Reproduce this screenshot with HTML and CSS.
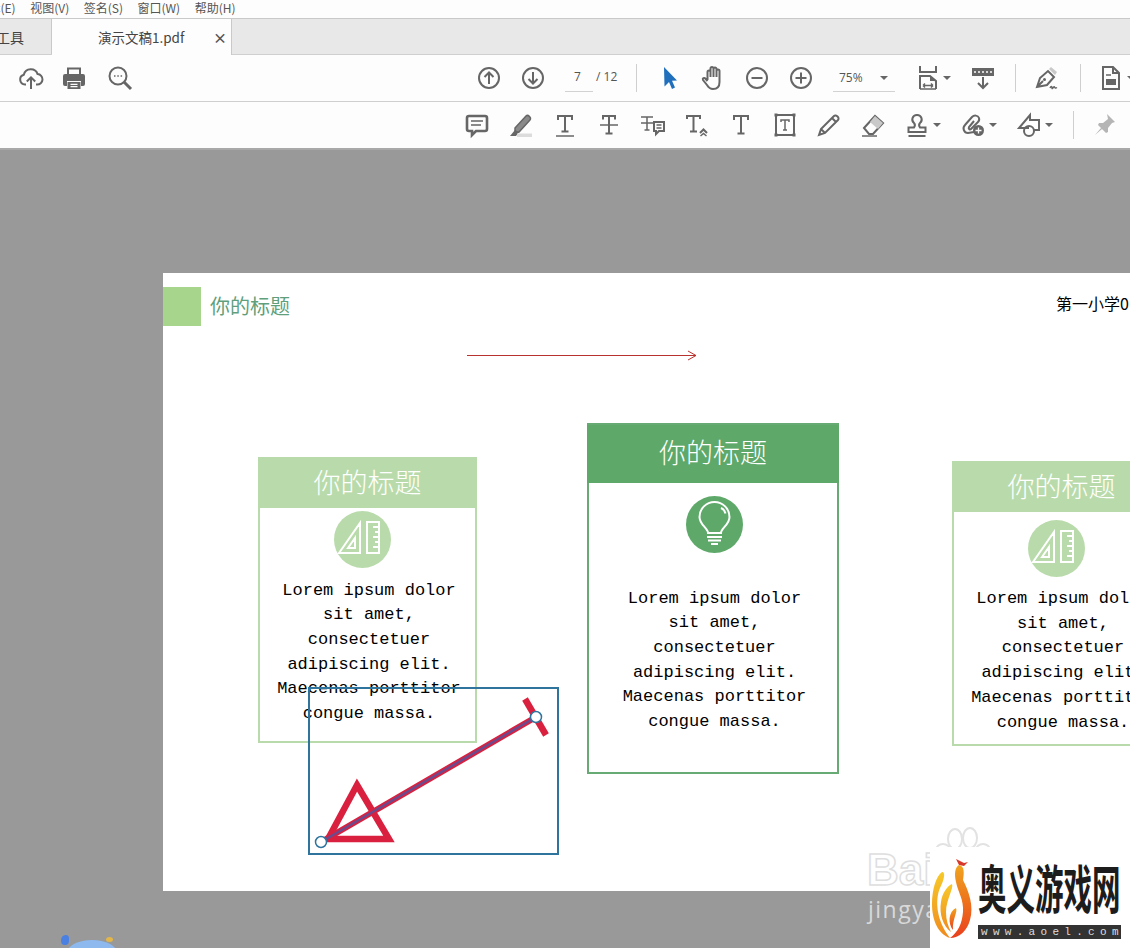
FILE: index.html
```html
<!DOCTYPE html>
<html lang="zh-CN">
<head>
<meta charset="utf-8">
<title>演示文稿1.pdf</title>
<link rel="stylesheet" href="styles.css">
</head>
<body>
<div class="app">
  <nav class="menu">
    <span class="menu-first">编辑(E)</span><span>视图(V)</span><span>签名(S)</span><span>窗口(W)</span><span>帮助(H)</span>
  </nav>
  <div class="tabs">
    <div class="tab-tools"><span>工具</span></div>
    <div class="tab-doc"><span class="tab-name">演示文稿1.pdf</span><span class="tab-close">×</span></div>
  </div>
  <div class="bar bar-main">
    <div class="cell"><svg class="ic" viewBox="0 0 24 24"><path d="M7 18.500H6A5 5 0 0 1 4.800 8.700 7.200 7.200 0 0 1 18.600 8.100 5.200 5.200 0 0 1 18 18.500H17"/><path d="M12 23V11.500M7.800 15.500l4.200-4.200 4.200 4.200"/></svg></div>
    <div class="cell"><svg class="ic" viewBox="0 0 24 24"><path class="solid" d="M3 8h18a2 2 0 0 1 2 2v8a2 2 0 0 1-2 2h-2v-5H5v5H3a2 2 0 0 1-2-2v-8a2 2 0 0 1 2-2z"/><path d="M6 8V2.500h12V8"/><path class="solid" d="M5.500 16h13v7h-13z"/><path class="white" d="M8.500 18.300h7M8.500 20.700h7"/></svg></div>
    <div class="cell"><svg class="ic" viewBox="0 0 24 24"><circle cx="10" cy="10" r="8.500"/><path class="thick" d="M16 16l7 7"/><path class="thin" d="M6 10h1.500M9.300 10h1.500M12.600 10h1.500"/></svg></div>
    <div></div>
    <div class="cell"><svg class="ic" viewBox="0 0 24 24"><circle cx="12" cy="12" r="10"/><path d="M12 18V6.500M7.500 11l4.500-4.500 4.500 4.500"/></svg></div>
    <div class="cell"><svg class="ic" viewBox="0 0 24 24"><circle cx="12" cy="12" r="10"/><path d="M12 6v11.500M7.500 13l4.500 4.500 4.500-4.500"/></svg></div>
    <div class="pager"><span class="page-input">7</span><span class="page-total">/ 12</span></div>
    <div class="cell"><i class="sep"></i></div>
    <div class="cell"><svg class="ic" viewBox="0 0 24 24"><path class="pointer" d="M6 1l13 13.500-5 .3 3 6.700-3 1.500-3-7-4.500 4.500z"/></svg></div>
    <div class="cell"><svg class="ic" viewBox="0 0 24 24"><path d="M6.500 14V6a1.500 1.500 0 0 1 3 0v5M9.500 11V2.500a1.500 1.500 0 0 1 3 0V11M12.500 11V3a1.500 1.500 0 0 1 3 0v8M15.500 11V5a1.500 1.500 0 0 1 3 0V16C18.500 20.500 16 23 12 23c-3 0-4.500-1.500-6-4L2 14c-.8-1.500 1.200-2.800 2.300-1.500l2.200 2.500"/></svg></div>
    <div class="cell"><svg class="ic" viewBox="0 0 24 24"><circle cx="12" cy="12" r="10"/><path d="M6.500 12h11"/></svg></div>
    <div class="cell"><svg class="ic" viewBox="0 0 24 24"><circle cx="12" cy="12" r="10"/><path d="M6.500 12h11M12 6.500v11"/></svg></div>
    <div class="zoombox"><div class="zoom-field"><span>75%</span><i class="caret"></i></div></div>
    <div class="wc"><svg class="ic" viewBox="0 0 24 24"><path d="M5 0v6h16V0M5 23V10h10l6 5v8"/><path class="thin" d="M5 23h16M8 19.500h10M8 19.500l2-2M8 19.500l2 2M18 19.500l-2-2M18 19.500l-2 2"/><path class="solid" d="M15 10l6 5h-6z"/></svg><i class="caret"></i></div>
    <div class="cell"><svg class="ic" viewBox="0 0 24 24"><path class="solid" d="M1 2h22v8H1z"/><path class="white" stroke-dasharray="2 2" d="M3 6h18"/><path d="M12 11v11M7 17l5 5 5-5"/></svg></div>
    <div class="cell"><i class="sep"></i></div>
    <div class="cell"><svg class="ic" viewBox="0 0 24 24"><path d="M2 21l3-9 8-7 6 6-7 8zM2 21l6-6"/><circle class="solid" cx="9.500" cy="13.500" r="1.500"/><path class="pale" d="M14 3l2-2 6 5-2 3z"/><path class="thin" d="M15 22c1-2 2-2 2 0s2-2 2.500-1 1 1.500 2.500.5"/></svg></div>
    <div class="cell"><i class="sep"></i></div>
    <div class="wc wc-doc"><svg class="ic" viewBox="0 0 24 24"><path d="M4 1h10l6 6v16H4zM14 1v6h6"/><path class="thin" d="M7 9h5"/><path class="solid" d="M7 13h10v6H7z"/></svg><i class="caret"></i></div>
  </div>
  <div class="bar bar-comment">
    <div></div>
    <div class="cell"><svg class="ic" viewBox="0 0 24 24"><path class="bold" d="M4 3h16a2 2 0 0 1 2 2v11a2 2 0 0 1-2 2H11l-4 4v-4H4a2 2 0 0 1-2-2V5a2 2 0 0 1 2-2z"/><path class="thin" d="M6 8h12M6 12h10"/></svg></div>
    <div class="cell"><svg class="ic" viewBox="0 0 24 24"><path class="mid" d="M6 15L17 3c2-2 6 2 4 4L10 19l-4 1z"/><path class="solid" d="M6 17l-5 6h6l3-4z"/><path class="hl" d="M8 20.500h15V24H8z"/></svg></div>
    <div class="cell"><svg class="ic" viewBox="0 0 24 24"><path d="M5 7V3h14v4M12 3v15M8.500 18.500h7"/><path class="thin" d="M3 23h18"/></svg></div>
    <div class="cell"><svg class="ic" viewBox="0 0 24 24"><path d="M6 6.500V3h12v3.500M12 3v17M8.500 20.500h7"/><path class="thin" d="M3 12h18"/></svg></div>
    <div class="cell"><svg class="ic" viewBox="0 0 24 24"><path class="thin" d="M0 4h12M0 10h12M6 4v13M3.500 17h5"/><path d="M13 9h10v9h-5l-3 3v-3h-2z"/><path class="thin" d="M15.500 12h5M15.500 15h5"/></svg></div>
    <div class="cell"><svg class="ic" viewBox="0 0 24 24"><path d="M2 6V3h13v3M8.500 3v15M5 18.500h7"/><path d="M15 20l3.500-3.500 3.500 3.500"/><path class="thin" d="M15.500 23l3-2.500 3 2.500"/></svg></div>
    <div class="cell"><svg class="ic" viewBox="0 0 24 24"><path d="M5 7V3h14v4M12 3v17M8.500 20.500h7"/></svg></div>
    <div class="cell"><svg class="ic" viewBox="0 0 24 24"><path d="M3 2h18v20H3z"/><path class="thin" d="M8 9V7h8v2M12 7v10M10 17h4"/><path class="solid" d="M1.500 .5h3v3h-3zM19.500 .5h3v3h-3zM1.500 20.500h3v3h-3zM19.500 20.500h3v3h-3z"/></svg></div>
    <div class="cell"><svg class="ic" viewBox="0 0 24 24"><path d="M2 22l2-6L17 3c2-2 6 2 4 4L8 20zM4 16l4 4M15 5l4 4"/></svg></div>
    <div class="cell"><svg class="ic" viewBox="0 0 24 24"><path d="M3 15L14 3l8 7-10 11H8z"/><path class="pale" d="M9 9l5-6 8 7-5 6z"/><path class="thin" d="M1 23h15"/></svg></div>
    <div class="wc"><svg class="ic" viewBox="0 0 24 24"><path d="M12 2a4.500 4.500 0 0 0-3 8c1 1 1 3 0 4.500H3.500V19h17v-4.500H15c-1-1.500-1-3.500 0-4.500a4.500 4.500 0 0 0-3-8zM3.500 23h17"/></svg><i class="caret"></i></div>
    <div class="wc"><svg class="ic" viewBox="0 0 24 24"><path d="M13 19l-6 1c-4 0-6-5-3-8l7-8c2-2 6-2 7 1s-1 4-2 5l-6 6c-1 1-3 0-2-2l5-6"/><circle class="solid" cx="17.500" cy="17.500" r="5.500"/><path class="white" d="M14.500 17.500h6M17.500 14.500v6"/></svg><i class="caret"></i></div>
    <div class="wc"><svg class="ic" viewBox="0 0 24 24"><path d="M12 15L2 15 13 2v5h9v10h-5"/><circle cx="12" cy="18" r="5"/></svg><i class="caret"></i></div>
    <div class="cell"><i class="sep"></i></div>
    <div class="cell"><svg class="ic ic-off" viewBox="0 0 24 24"><path class="solid-off" d="M14 1l8 8-3 1-4 5 0 4-2 1-8-8 1-2h4l5-4zM8 15l-6 7 7-6z"/></svg></div>
  </div>
  <main class="canvas">
    <section class="slide">
      <div class="slide-mark"></div>
      <div class="slide-title">你的标题</div>
      <div class="slide-school">第一小学0</div>
      <svg class="slide-arrow" viewBox="0 0 232 14"><path d="M0 6.500h229M221 2l8 4.500-8 4.500"/></svg>

      <article class="card card-a">
        <h2>你的标题</h2>
        <div class="disc disc-light"><svg viewBox="0 0 57 57" class="glyph"><path d="M5 42L26 12v30zM14 37l7-10v10zM33 11h12v31H33zM39 16h6M41 21h4M39 26h6M41 31h4M39 36h6"/></svg></div>
        <p>Lorem ipsum dolor<br>sit amet,<br>consectetuer<br>adipiscing elit.<br>Maecenas porttitor<br>congue massa.</p>
      </article>

      <article class="card card-b">
        <h2>你的标题</h2>
        <div class="disc disc-dark"><svg viewBox="0 0 57 57" class="glyph"><path d="M22 37c0-5-8.500-8-8.500-16a15 15 0 0 1 30 0c0 8-8.500 11-8.500 16zM21 41h15M22 44.500h13M25 48h7M35 12c2.500 1 4 3 4.500 5.500"/></svg></div>
        <p>Lorem ipsum dolor<br>sit amet,<br>consectetuer<br>adipiscing elit.<br>Maecenas porttitor<br>congue massa.</p>
      </article>

      <article class="card card-c">
        <h2>你的标题</h2>
        <div class="disc disc-light"><svg viewBox="0 0 57 57" class="glyph"><path d="M5 42L26 12v30zM14 37l7-10v10zM33 11h12v31H33zM39 16h6M41 21h4M39 26h6M41 31h4M39 36h6"/></svg></div>
        <p>Lorem ipsum dolor<br>sit amet,<br>consectetuer<br>adipiscing elit.<br>Maecenas porttitor<br>congue massa.</p>
      </article>

      <svg class="annot" viewBox="0 0 252 170">
        <path class="annot-shape" d="M49 98L81 152H20z"/>
        <path class="annot-shape" d="M217 12l21 36"/>
        <path class="annot-shape annot-shaft" d="M13 155L228 30"/>
        <path class="annot-core" d="M13 155L228 30"/>
        <rect class="annot-box" x="1" y="1" width="249" height="166"/>
        <circle class="annot-handle" cx="228" cy="30" r="5.500"/>
        <circle class="annot-handle" cx="13" cy="155" r="5.500"/>
      </svg>
    </section>
    <div class="wm-word">Bai</div>
    <svg class="wm-paw" viewBox="0 0 60 30"><ellipse cx="22" cy="12" rx="7" ry="10"/><ellipse cx="37" cy="11" rx="7" ry="10"/><ellipse cx="10" cy="23" rx="7" ry="6"/><ellipse cx="50" cy="23" rx="7" ry="6"/></svg>
    <div class="wm-sub">jingya</div>
    <div class="bird"><i class="bird-fin"></i><i class="bird-dot"></i><i class="bird-body"></i></div>
    <aside class="logo">
      <svg class="logo-flame" viewBox="0 0 42 82">
        <defs>
          <linearGradient id="fa" x1="0" y1="0" x2="0" y2="1"><stop offset="0" stop-color="#f0a51e"/><stop offset="1" stop-color="#ea3f1d"/></linearGradient>
          <linearGradient id="fb" x1="0" y1="0" x2="0" y2="1"><stop offset="0" stop-color="#f7c929"/><stop offset="1" stop-color="#ef8a1e"/></linearGradient>
        </defs>
        <path fill="#d8392b" d="M24 1l8 4 4-1-4 4-5-1z"/>
        <path fill="url(#fa)" d="M27 7c6 1 5 9 4 15 6 12 11 26 7 40-3 11-11 18-20 18 8-6 12-14 13-26 1-12-5-20-7-30-2-8-1-15 3-17z"/>
        <path fill="url(#fb)" d="M10 14c4 0 2 8-2 16C3 42 4 62 18 80 6 76 0 62 0 46 0 32 4 18 10 14z"/>
        <path fill="url(#fb)" d="M20 26c2 4-6 16-6 28 0 8 2 14 5 20-8-6-12-18-10-30 1-8 6-16 11-18z"/>
        <path fill="url(#fa)" d="M24 50c2 4-4 12-3 22-5-6-5-18 3-22z"/>
      </svg>
      <div class="logo-text">
        <div class="logo-name">奥义游戏网</div>
        <div class="logo-url">www.aoel.com</div>
      </div>
    </aside>
  </main>
</div>
</body>
</html>
```
FILE: styles.css
```css
* { box-sizing: border-box; }
html, body { margin: 0; padding: 0; }
body { width: 1130px; height: 948px; overflow: hidden; background: #999; font-family: "Noto Sans CJK SC", "Liberation Sans", sans-serif; }
.app { width: 1130px; height: 948px; display: flex; flex-direction: column; overflow: hidden; position: relative; }

.menu { height: 19px; flex: none; display: flex; gap: 14.500px; margin-left: -23.500px; font-size: 12px; line-height: 15px; color: #555; background: #fdfdfd; border-bottom: 1px solid #c9c9c9; white-space: nowrap; width: 1153.500px; }

.tabs { height: 36px; flex: none; display: flex; background: #e8e8e8; border-bottom: 1px solid #cfcfcf; }
.tab-tools { width: 52px; display: flex; align-items: center; justify-content: flex-end; padding-right: 27px; font-size: 14px; color: #444; border-right: 1px solid #c9c9c9; white-space: nowrap; }
.tab-doc { width: 180px; height: 36px; display: flex; align-items: center; background: #fdfdfd; border-right: 1px solid #c9c9c9; padding-left: 46px; font-size: 13.500px; color: #444; }
.tab-name { width: 115px; }
.tab-close { font-size: 14px; font-weight: 700; color: #555; line-height: 1; }

.bar { flex: none; display: grid; align-items: center; background: #fdfdfd; }
.bar-main { height: 47px; border-bottom: 1px solid #cfcfcf; padding-left: 9px; grid-template-columns: 44px 42px 50px 322px 44px 44px 72px 18px 50px 36px 52px 36px 86px 56px 44px 20px 44px 22px 50px; }
.bar-comment { height: 48px; border-bottom: 2px solid #a9a9a9; grid-template-columns: 455px repeat(10, 44px) 56px 56px 56px 20px 44px; }

.cell { display: flex; justify-content: center; align-items: center; height: 24px; }
.wc { display: flex; align-items: center; gap: 4px; padding-left: 10px; }
.wc-doc { padding-left: 8px; }

.ic { width: 24px; height: 24px; flex: none; fill: none; stroke: #666; stroke-width: 2; overflow: visible; }
.ic .solid { fill: #666; stroke: none; }
.ic .white { stroke: #fdfdfd; stroke-width: 1.300; }
.ic .thin { stroke-width: 1.500; }
.ic .mid { fill: #8a8a8a; stroke: #666; stroke-width: 1.500; }
.ic .bold { stroke-width: 2.600; }
.ic .thick { stroke-width: 3; }
.ic .pale { fill: #c9c9c9; stroke: none; }
.ic .hl { fill: #dcdcdc; stroke: none; }
.ic .pointer { fill: #1f6fbd; stroke: none; }
.ic-off .solid-off { fill: #b5b5b5; stroke: none; }

.sep { display: block; width: 1px; height: 28px; background: #cfcfcf; }
.caret { display: block; width: 0; height: 0; border-left: 4px solid transparent; border-right: 4px solid transparent; border-top: 4px solid #666; flex: none; }

.pager { display: flex; align-items: flex-start; height: 28px; padding-left: 10px; font-size: 12px; color: #555; font-family: "Open Sans", "Liberation Sans", sans-serif; }
.page-input { width: 28px; height: 28px; line-height: 26px; text-align: center; padding-right: 3px; border-bottom: 1px solid #d2d2d2; }
.page-total { margin-left: 3px; line-height: 26px; white-space: nowrap; }

.zoombox { padding-left: 14px; }
.zoom-field { width: 62px; height: 28px; padding: 0 7px 0 6px; display: flex; align-items: center; justify-content: space-between; font-size: 12px; color: #555; font-family: "Open Sans", "Liberation Sans", sans-serif; border-bottom: 1px solid #d2d2d2; }

.canvas { flex: 1; position: relative; background: #999; padding: 123px 0 0 163px; overflow: hidden; }
.slide { position: relative; width: 1100px; height: 618px; background: #fff; }

.slide-mark { position: absolute; left: 0; top: 14px; width: 38px; height: 39px; background: #a6d58b; }
.slide-title { position: absolute; left: 47px; top: 18px; font-size: 20px; line-height: 30px; color: #5f9f7c; }
.slide-school { position: absolute; left: 893px; top: 18px; font-size: 16px; line-height: 24px; color: #000; white-space: nowrap; }
.slide-arrow { position: absolute; left: 304px; top: 76px; width: 232px; height: 14px; fill: none; stroke: #b8332f; stroke-width: 1; }

.card { position: absolute; border: 2px solid; background: #fff; display: flex; flex-direction: column; align-items: center; }
.card h2 { margin: 0 -2px; align-self: stretch; display: flex; align-items: center; justify-content: center; font-size: 27px; font-weight: 300; color: #fff; padding-bottom: 5px; white-space: nowrap; }
.card p { margin: 0; padding-left: 3px; width: 100%; text-align: center; font-family: "Liberation Mono", monospace; font-size: 17px; line-height: 24.700px; color: #000; white-space: nowrap; }

.card-a { left: 95px; top: 184px; width: 219px; height: 286px; border-color: #b9dbab; }
.card-a h2 { height: 49px; background: #b9dbab; }
.card-a .disc { margin-top: 3px; margin-left: -11px; }
.card-a p { margin-top: 10.500px; }

.card-b { left: 424px; top: 150px; width: 252px; height: 351px; border-color: #68aa74; }
.card-b h2 { height: 58px; background: #5ea96a; }
.card-b .disc { margin-top: 13px; margin-left: 2px; }
.card-b p { margin-top: 33.500px; }

.card-c { left: 789px; top: 188px; width: 219px; height: 285px; border-color: #b9dbab; }
.card-c h2 { height: 49px; background: #b9dbab; }
.card-c .disc { margin-top: 7.500px; margin-left: -11px; }
.card-c p { margin-top: 10.500px; }

.disc { width: 57px; height: 57px; border-radius: 50%; flex: none; }
.disc-light { background: #b9dbab; }
.disc-dark { background: #5ea96a; }
.glyph { display: block; width: 57px; height: 57px; fill: none; stroke: #fff; stroke-width: 2; }

.annot { position: absolute; left: 145px; top: 414px; width: 252px; height: 170px; fill: none; }
.annot-shape { stroke: #d9213f; stroke-width: 6.500; }
.annot-shaft { stroke-width: 6; }
.annot-core { stroke: #6d4a8c; stroke-width: 2.500; }
.annot-box { stroke: #2f749d; stroke-width: 2; }
.annot-handle { fill: #fff; stroke: #2f749d; stroke-width: 1.500; }

.wm-word { position: absolute; left: 867px; top: 695px; font-family: "Liberation Sans", sans-serif; font-size: 44px; font-weight: 700; line-height: 50px; color: #fff; -webkit-text-stroke: 1.500px #dedede; }
.wm-paw { position: absolute; left: 933px; top: 677px; width: 60px; height: 30px; fill: #fff; stroke: #e2e2e2; stroke-width: 2; }
.wm-sub { position: absolute; left: 868px; top: 744px; font-family: "Open Sans", "Liberation Sans", sans-serif; font-size: 23px; letter-spacing: 1.500px; line-height: 30px; color: #d9d9d9; }

.bird { position: absolute; left: 58px; top: 785px; width: 64px; height: 14px; }
.bird-body { position: absolute; left: 9px; top: 5px; width: 50px; height: 26px; border-radius: 50%; background: #8db9ee; }
.bird-fin { position: absolute; left: 3px; top: 0; width: 8px; height: 10px; border-radius: 60% 40% 50% 50%; background: #4a80e2; }
.bird-dot { position: absolute; left: 48px; top: 2px; width: 7px; height: 5px; border-radius: 50%; background: #e3b64a; }

.logo { position: absolute; left: 930px; top: 697px; width: 200px; height: 101px; background: #fff; display: flex; padding: 11px 0 0 2px; }
.logo-flame { width: 42px; height: 82px; flex: none; }
.logo-text { margin-left: 4px; width: 144px; }
.logo-name { font-family: "Noto Sans CJK SC", sans-serif; font-weight: 700; font-size: 28.500px; line-height: 30px; height: 66px; color: #1c1c1c; white-space: nowrap; transform-origin: left top; transform: scaleY(1.850); margin-top: 1px; }
.logo-url { width: 143px; height: 14px; background: #333; color: #ddd; font-family: "Liberation Mono", monospace; font-size: 11px; line-height: 14px; letter-spacing: 5.300px; padding-left: 3px; white-space: nowrap; overflow: hidden; }
```
